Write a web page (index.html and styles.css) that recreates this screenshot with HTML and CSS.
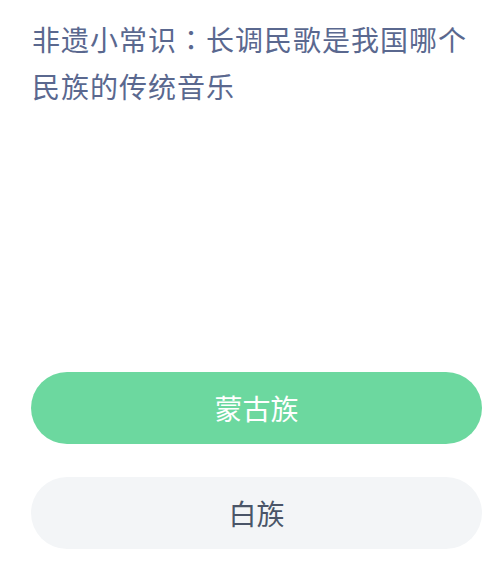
FILE: index.html
```html
<!DOCTYPE html>
<html lang="zh-CN">
<head>
    <meta charset="UTF-8">
    <title>非遗小常识</title>
    <link rel="stylesheet" href="styles.css">
</head>
<body>
<div class="quiz">
    <h1 class="question">非遗小常识<span class="colon" lang="zh-TW">：</span>长调民歌是我国哪个民族的传统音乐</h1>
    <div class="options">
        <div class="option correct">蒙古族</div>
        <div class="option">白族</div>
    </div>
</div>
</body>
</html>
```

FILE: styles.css
```css
body {
    margin: 0;
    background: #ffffff;
    font-family: "Noto Sans CJK SC", "Noto Sans", sans-serif;
}

.quiz {
    width: 451px;
    padding: 16px 19px 0 31px;
}

.question {
    margin: 0 0 0 1px;
    font-size: 28px;
    font-weight: normal;
    line-height: 47px;
    letter-spacing: 1px;
    color: #5a688f;
}

.colon {
    font-family: "Noto Sans CJK TC", sans-serif;
}

.options {
    display: flex;
    flex-direction: column;
    gap: 33px;
    margin-top: 262px;
}

.option {
    height: 72px;
    border-radius: 36px;
    background: #f3f5f7;
    color: #4a5568;
    font-size: 28px;
    display: flex;
    align-items: center;
    justify-content: center;
}

.option.correct {
    background: #6cd89f;
    color: #ffffff;
}
```
